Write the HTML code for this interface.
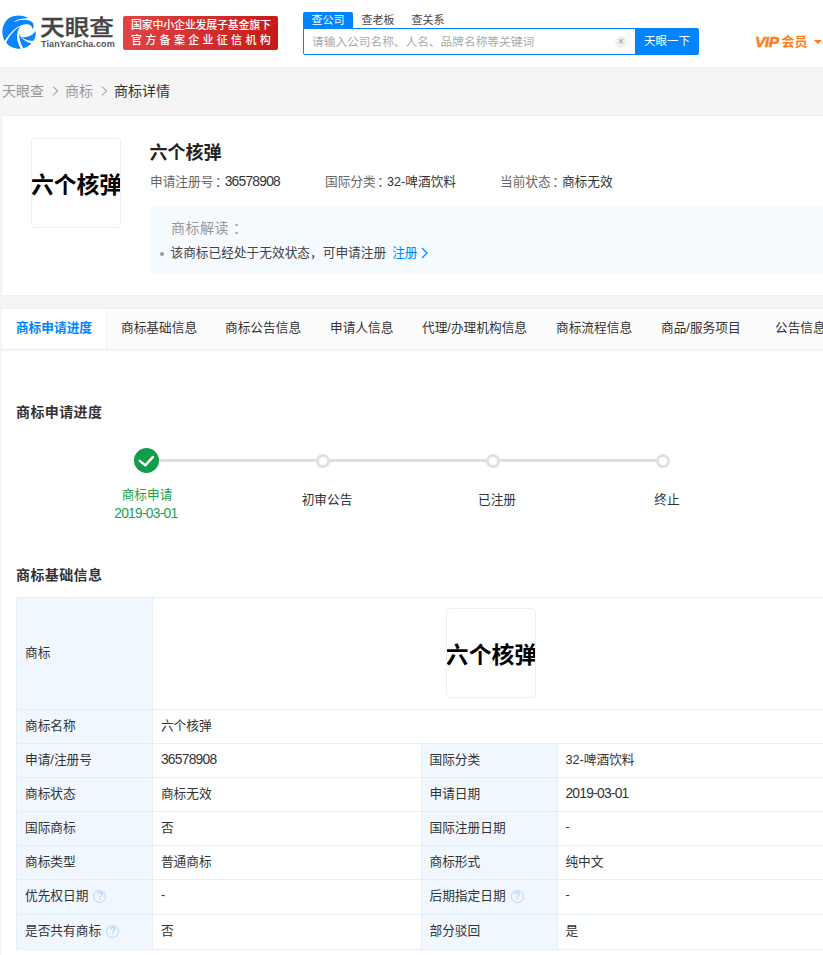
<!DOCTYPE html>
<html lang="zh-CN">
<head>
<meta charset="utf-8">
<title>六个核弹 - 商标详情 - 天眼查</title>
<style>
*{box-sizing:border-box;margin:0;padding:0}
html,body{width:823px;height:955px;overflow:hidden;background:#f5f5f5}
body{font-family:"Liberation Sans","Noto Sans CJK SC",sans-serif;font-size:12.7px;color:#333;position:relative}
.abs{position:absolute;white-space:nowrap}
/* header */
#hd{position:absolute;left:0;top:0;width:823px;height:68px;background:#fff;border-bottom:1px solid #eee}
#logo-t{left:40px;top:14px;font-size:22px;line-height:28px;color:#444;font-weight:500;-webkit-text-stroke:.35px #444;transform:scaleX(1.12);transform-origin:0 0}
#logo-s{left:41px;top:38px;font-size:9px;line-height:12px;color:#555;font-weight:bold;letter-spacing:0.1px}
#ban{left:123px;top:16px;width:155px;height:34px;border-radius:2px;background:linear-gradient(90deg,#e24444,#c61a1c);color:#fff;font-size:11px;font-weight:500}
#ban div{position:absolute;left:8px;white-space:nowrap;line-height:14px}
#stab{left:303px;top:12px;height:16px;font-size:11px;line-height:17.5px;color:#444}
#stab span{display:inline-block;width:50px;text-align:center;height:16px;vertical-align:top}
#stab .on{background:#0084ff;color:#fff;border-radius:2px 2px 0 0}
#sbox{left:303px;top:28px;width:334px;height:27px;border:1px solid #0084ff;background:#fff;border-radius:0 0 0 2px;font-size:11.7px;color:#aaa;line-height:26.5px;padding-left:8px}
#sbtn{left:635px;top:28px;width:64px;height:27px;background:#0084ff;color:#fff;font-size:11.5px;line-height:27px;text-align:center;border-radius:0 2px 2px 0}
#sclr{left:615px;top:35.5px;width:12px;height:12px;border-radius:50%;background:#f1f1f1;color:#999;font-size:10px;line-height:12px;text-align:center}
#vip{left:755px;top:32px;font-size:13px;line-height:18px;color:#ff7d1e;font-weight:bold}
#vip i{font-weight:bold;font-style:italic;letter-spacing:-0.5px;font-size:15.5px;margin-right:3px;-webkit-text-stroke:0.5px #ff7d1e;position:relative;top:1.2px}
#vipc{left:814px;top:40px;width:0;height:0;border-left:4px solid transparent;border-right:4px solid transparent;border-top:4px solid #ff7d1e}
/* breadcrumb */
#bc{left:2px;top:81px;width:300px;height:20px;font-size:14px;line-height:20px;color:#999}
#bc span,#bc svg{position:absolute;top:0;white-space:nowrap}
/* card */
#card{position:absolute;left:1px;top:115px;width:832px;height:181px;background:#fff;border:1px solid #efefef}
.tmimg{position:absolute;width:90px;height:90px;border:1px solid #eee;border-radius:4px;background:#fff;overflow:hidden}
.tmimg span{position:absolute;left:-5.5px;top:30.5px;width:100px;text-align:center;font-size:22.8px;line-height:30px;font-weight:bold;color:#000;white-space:nowrap}
#ttl{left:149.5px;top:141px;font-size:18px;line-height:24px;font-weight:bold;color:#222}
.inf{top:172.5px;font-size:12.7px;line-height:18px;color:#666}
.inf em{font-style:normal;color:#333}
.inf u{text-decoration:none;position:relative;left:1.5px}
#tip{position:absolute;left:150px;top:207px;width:680px;height:66px;background:#f5faff}
#tip1{left:171px;top:219px;font-size:14px;line-height:18px;color:#999;letter-spacing:.5px}
#tip1 u{text-decoration:none;position:relative;left:4px}
#tip2{left:170.5px;top:244.3px;font-size:12.7px;line-height:18px;color:#444}
#tip2 a{color:#0084ff;margin-left:6px}
#dot{left:160px;top:252px;width:4px;height:4px;border-radius:50%;background:#999}
/* tabs */
#tabs{position:absolute;left:2px;top:308px;width:830px;height:42px;background:#fcfcfc;border-top:1px solid #efefef;border-bottom:1px solid #ececec;font-size:12.7px;line-height:39.6px;color:#333}
#tabs span{position:absolute;top:0;white-space:nowrap}
#tabs .on{left:0;width:105px;height:40px;background:#fff;color:#0084ff;text-align:center;font-weight:bold;border-right:1px solid #f0f0f0}
#main{position:absolute;left:2px;top:350px;width:830px;height:620px;background:#fff;border-top:2px solid #fbfbfb}
.h3{font-size:14px;line-height:20px;font-weight:bold;color:#333;letter-spacing:.4px}
/* progress */
#pline{left:158px;top:459px;width:504px;height:3px;background:#e0e0e0}
.pdot{width:14px;height:14px;border-radius:50%;border:3.6px solid #e0e0e0;background:#fff}
#pok{left:133.6px;top:447.9px;width:25.6px;height:25.6px;border-radius:50%;background:#109e4a}
.plab{font-size:12.7px;line-height:18px;color:#333;text-align:center;width:100px}
/* table */
#tb{position:absolute;left:16px;top:597px;width:830px;border-collapse:collapse;font-size:12.7px;color:#333}
#tb td{border:1px solid #e4eef6;height:34px;padding:0 8px 3.5px 8px;vertical-align:middle;white-space:nowrap}
#tb td.k{background:#f0f7ff}
#tb tr.t35 td{height:35px;padding-bottom:5px}
#tb td.v4{padding-left:7px}
.n{font-size:13.8px;letter-spacing:-.75px}
#tb td.n{padding-bottom:2.5px}
.q{display:inline-block;width:13px;height:13px;border:1px solid #b3d4f5;border-radius:50%;color:#a5ccf3;font-size:10px;line-height:11.5px;text-align:center;vertical-align:middle;margin-left:5px;position:relative;top:-0.5px}
</style>
</head>
<body>
<div id="hd"></div>
<svg class="abs" style="left:0;top:12px" width="40" height="40" viewBox="0 0 823 823">
<g fill="#0a84ff">
<path d="M95 595C20 450 30 250 180 130C300 50 480 60 580 130C480 125 380 150 290 190L300 200C420 150 560 140 650 200C700 240 710 310 665 350C660 290 620 250 540 250C400 250 230 380 95 595Z"/>
<path d="M125 630C200 480 300 360 420 300C370 360 340 450 350 540C360 630 400 700 430 750C300 770 180 710 125 630Z"/>
<path d="M400 440C420 520 500 610 650 645C600 700 540 740 480 745C420 650 390 540 400 440Z"/>
<path d="M450 515C550 530 680 480 735 390C745 470 720 540 690 590C600 600 500 570 450 515Z"/>
</g>
</svg>
<div class="abs" id="logo-t">天眼查</div>
<div class="abs" id="logo-s">TianYanCha.com</div>
<div class="abs" id="ban"><div style="top:2.3px;letter-spacing:-0.25px">国家中小企业发展子基金旗下</div><div style="top:17.4px;letter-spacing:3.3px">官方备案企业征信机构</div></div>
<div class="abs" id="stab"><span class="on">查公司</span><span>查老板</span><span>查关系</span></div>
<div class="abs" id="sbox">请输入公司名称、人名、品牌名称等关键词</div>
<div class="abs" id="sclr">×</div>
<div class="abs" id="sbtn">天眼一下</div>
<div class="abs" id="vip"><i>VIP</i>会员</div>
<div class="abs" id="vipc"></div>

<div class="abs" id="bc"><span style="left:0">天眼查</span><svg style="left:50px" width="7" height="20" viewBox="0 0 7 20"><path d="M1 5.6 L5.6 10 L1 14.4" fill="none" stroke="#aaa" stroke-width="1.1"/></svg><span style="left:63px">商标</span><svg style="left:99px" width="7" height="20" viewBox="0 0 7 20"><path d="M1 5.6 L5.6 10 L1 14.4" fill="none" stroke="#aaa" stroke-width="1.1"/></svg><span style="left:112px;color:#333">商标详情</span></div>

<div id="card"></div>
<div class="tmimg" style="left:31px;top:138px"><span>六个核弹</span></div>
<div class="abs" id="ttl">六个核弹</div>
<div class="abs inf" style="left:150px">申请注册号<u>：</u><em class="n" style="margin-left:-1.5px">36578908</em></div>
<div class="abs inf" style="left:325px">国际分类<u>：</u><em style="margin-left:-1.5px">32-啤酒饮料</em></div>
<div class="abs inf" style="left:500px">当前状态<u>：</u><em style="margin-left:-1.5px">商标无效</em></div>
<div id="tip"></div>
<div class="abs" id="tip1">商标解读<u>：</u></div>
<div class="abs" id="dot"></div>
<div class="abs" id="tip2">该商标已经处于无效状态，可申请注册<a>注册<svg width="8" height="12" viewBox="0 0 8 12" style="vertical-align:-1.5px;margin-left:3px"><path d="M1 1 L6 6 L1 11" fill="none" stroke="#0084ff" stroke-width="1.2"/></svg></a></div>

<div id="tabs">
<span class="on">商标申请进度</span>
<span style="left:119px">商标基础信息</span>
<span style="left:223px">商标公告信息</span>
<span style="left:328px">申请人信息</span>
<span style="left:420px">代理/办理机构信息</span>
<span style="left:554px">商标流程信息</span>
<span style="left:659px">商品/服务项目</span>
<span style="left:773px">公告信息</span>
</div>
<div id="main"></div>
<div class="abs h3" style="left:16px;top:402px">商标申请进度</div>

<div class="abs" id="pline"></div>
<div class="abs" id="pok"><svg width="25.6" height="25.6" viewBox="0 0 25.6 25.6" style="display:block"><path d="M5.8 12.8 L11.3 17.4 L19 8.9" fill="none" stroke="#fff" stroke-width="2.4" stroke-linecap="round" stroke-linejoin="round"/></svg></div>
<div class="abs pdot" style="left:315.6px;top:453.5px"></div>
<div class="abs pdot" style="left:485.6px;top:453.5px"></div>
<div class="abs pdot" style="left:655.8px;top:453.5px"></div>
<div class="abs plab" style="left:97px;top:485.8px;color:#1a9f4e">商标申请</div>
<div class="abs plab n" style="left:95.8px;top:505px;color:#1a9f4e">2019-03-01</div>
<div class="abs plab" style="left:277px;top:490.5px">初审公告</div>
<div class="abs plab" style="left:447px;top:490.5px">已注册</div>
<div class="abs plab" style="left:617px;top:490.5px">终止</div>

<div class="abs h3" style="left:16px;top:565px">商标基础信息</div>

<table id="tb">
<colgroup><col style="width:136px"><col style="width:269px"><col style="width:137px"><col style="width:288px"></colgroup>
<tr><td class="k" style="height:112px">商标</td><td colspan="3" style="position:relative"><div class="tmimg" style="left:293px;top:10px"><span>六个核弹</span></div></td></tr>
<tr><td class="k">商标名称</td><td colspan="3">六个核弹</td></tr>
<tr><td class="k">申请/注册号</td><td class="n">36578908</td><td class="k">国际分类</td><td class="v4">32-啤酒饮料</td></tr>
<tr><td class="k">商标状态</td><td>商标无效</td><td class="k">申请日期</td><td class="v4 n">2019-03-01</td></tr>
<tr><td class="k">国际商标</td><td>否</td><td class="k">国际注册日期</td><td class="v4">-</td></tr>
<tr><td class="k">商标类型</td><td>普通商标</td><td class="k">商标形式</td><td class="v4">纯中文</td></tr>
<tr class="t35"><td class="k">优先权日期<span class="q">?</span></td><td>-</td><td class="k">后期指定日期<span class="q">?</span></td><td class="v4">-</td></tr>
<tr class="t35"><td class="k">是否共有商标<span class="q">?</span></td><td>否</td><td class="k">部分驳回</td><td class="v4">是</td></tr>
</table>
</body>
</html>
